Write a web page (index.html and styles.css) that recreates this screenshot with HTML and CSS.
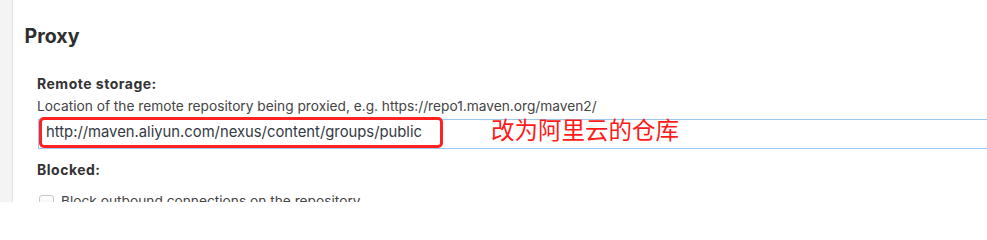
FILE: index.html
```html
<!DOCTYPE html>
<html lang="en">
<head>
<meta charset="utf-8">
<title>Proxy</title>
<link rel="stylesheet" href="styles.css">
</head>
<body>
<div class="page">
  <div class="rail"></div>
  <main class="main">
    <h2 class="section-title">Proxy</h2>
    <div class="fields">
      <div class="field-label">Remote storage:</div>
      <div class="field-help">Location of the remote repository being proxied, e.g. https://repo1.maven.org/maven2/</div>
      <div class="input-row">
        <input class="text-input" type="text" value="http://maven.aliyun.com/nexus/content/groups/public">
        <div class="note-box"></div>
        <div class="note-text">改为阿里云的仓库</div>
      </div>
      <div class="field-label blocked">Blocked:</div>
      <label class="check-row">
        <span class="checkbox"></span>
        <span class="check-text">Block outbound connections on the repository</span>
      </label>
    </div>
  </main>
</div>
</body>
</html>
```
FILE: styles.css
```css
html, body {
  margin: 0;
  padding: 0;
  background: #ffffff;
  height: 202px;
  overflow: hidden;
}

body {
  font-family: Inter, "Open Sans", sans-serif;
  color: #333333;
}

.page {
  display: flex;
  height: 202px;
  width: 987px;
  overflow: hidden;
}

.rail {
  flex: 0 0 12px;
  background: #f4f4f4;
  border-right: 1px solid #e2e2e2;
}

.main {
  flex: 1;
  padding: 24.2px 0 0 11.5px;
  min-width: 0;
}

.section-title {
  margin: 0;
  font-size: 19.6px;
  line-height: 24px;
  font-weight: 700;
  color: #2e2e2e;
  letter-spacing: 0;
}

.fields {
  padding-left: 12.5px;
}

.field-label {
  margin-top: 26.7px;
  font-size: 14px;
  line-height: 18px;
  font-weight: 700;
  letter-spacing: 0.5px;
  color: #333333;
}

.field-help {
  margin-top: 4.9px;
  font-size: 13.73px;
  line-height: 17px;
  color: #444444;
}

.input-row {
  position: relative;
  margin-top: 4.2px;
  height: 30px;
}

.text-input {
  display: block;
  box-sizing: border-box;
  margin: 0 0 0 1px;
  width: 1000px;
  height: 30px;
  padding: 0 8px 3px 7px;
  border: 1px solid #9cc8ef;
  border-radius: 0;
  background: #ffffff;
  font-family: Inter, "Open Sans", sans-serif;
  font-size: 14.8px;
  color: #333a44;
  outline: none;
}

.note-box {
  position: absolute;
  left: 2px;
  top: -2px;
  width: 404px;
  height: 31px;
  box-sizing: border-box;
  border: 3px solid #ff2222;
  border-radius: 5px;
}

.note-text {
  position: absolute;
  left: 454px;
  top: -1.3px;
  font-family: "Noto Sans CJK SC", sans-serif;
  font-size: 23.5px;
  line-height: 23.5px;
  color: #ff1a1a;
  white-space: nowrap;
}

.blocked {
  margin-top: 11.9px;
}

.check-row {
  display: flex;
  align-items: flex-start;
  gap: 7px;
  margin-top: 14.3px;
}

.checkbox {
  flex: 0 0 auto;
  box-sizing: border-box;
  width: 15px;
  height: 15px;
  margin: 1.8px 0 0 2px;
  border: 1px solid #c6c6c6;
  border-radius: 3px;
  background: linear-gradient(#ffffff, #eeeeee);
}

.check-text {
  font-size: 13.73px;
  line-height: 17px;
  color: #444444;
}
```
